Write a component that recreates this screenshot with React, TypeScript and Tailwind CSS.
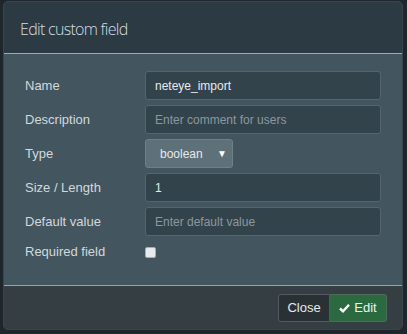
import React from "react";

const Row = ({ label, children }: { label: string; children: React.ReactNode }) => (
  <div className="flex items-center h-[29px]">
    <div className="w-[120px] text-[13px] text-[#d3d8db]">{label}</div>
    <div className="flex-1">{children}</div>
  </div>
);

export default function App() {
  return (
    <div className="w-[407px] h-[334px] bg-[#1f272c] pt-px pl-[3px] pr-[4px]" style={{ fontFamily: "'Liberation Sans', Arial, sans-serif" }}>
      <div className="h-[329px] rounded-[5px] border border-[#3a464d] overflow-hidden flex flex-col bg-[#435660]">
        <div className="h-[52px] shrink-0 bg-[#2b3a43] border-b border-[#a3abb0] flex items-center pl-[16px]">
          <span className="text-[16px] font-light tracking-[-0.7px] text-[#d9dee1] pt-[3px]" style={{ fontFamily: "'Open Sans', sans-serif" }}>Edit custom field</span>
        </div>
        <div className="flex-1 pt-[17px] pl-[21px] pr-[21px] flex flex-col gap-[5px]">
          <Row label="Name">
            <div className="h-[29px] rounded-[3px] border border-[#55656e] bg-[#33434b] flex items-center px-[9px] text-[12px] text-[#e6eaec]">neteye_import</div>
          </Row>
          <Row label="Description">
            <div className="h-[29px] rounded-[3px] border border-[#55656e] bg-[#33434b] flex items-center px-[9px] text-[12px] text-[#8c989e]">Enter comment for users</div>
          </Row>
          <Row label="Type">
            <div className="h-[29px] w-[88px] rounded-[3px] border border-[#6e7f86] bg-[#5e7078] flex items-center pl-[14px] pr-[5px] text-[12px] text-[#e6eaec] justify-between">
              <span>boolean</span>
              <span className="text-[10px] text-white">▼</span>
            </div>
          </Row>
          <Row label="Size / Length">
            <div className="h-[29px] rounded-[3px] border border-[#55656e] bg-[#33434b] flex items-center px-[9px] text-[12px] text-[#e6eaec]">1</div>
          </Row>
          <Row label="Default value">
            <div className="h-[29px] rounded-[3px] border border-[#55656e] bg-[#33434b] flex items-center px-[9px] text-[12px] text-[#8c989e]">Enter default value</div>
          </Row>
          <div className="flex items-center h-[22px]">
            <div className="w-[120px] text-[13px] text-[#d3d8db]">Required field</div>
            <div className="w-[11px] h-[11px] rounded-[2px] bg-[#e8eaeb] border border-[#a8adb0]" />
          </div>
        </div>
        <div className="h-[44px] shrink-0 bg-[#353e43] border-t border-[#9aa3a8] flex items-start justify-end pr-[15px] pt-[8px]">
          <div className="flex h-[28px]">
            <div className="w-[52px] rounded-l-[3px] border border-[#535b60] bg-[#2a3135] flex items-center justify-center text-[13px] text-[#e6eaec]">Close</div>
            <div className="w-[57px] rounded-r-[3px] border border-l-0 border-[#4d6b57] bg-[#2b6a40] flex items-center justify-center gap-[4px] text-[13px] text-[#eef2ef]">
              <svg width="11" height="10" viewBox="0 0 11 10"><path d="M1 5.5 L4 8.3 L10 1.8" stroke="white" strokeWidth="2.4" fill="none" /></svg>
              <span>Edit</span>
            </div>
          </div>
        </div>
      </div>
    </div>
  );
}
